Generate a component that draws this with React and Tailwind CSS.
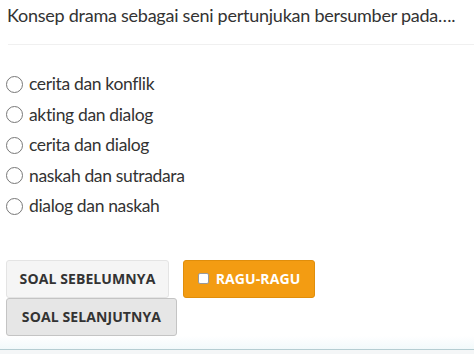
import React, { useState } from "react";

const options = [
  "cerita dan konflik",
  "akting dan dialog",
  "cerita dan dialog",
  "naskah dan sutradara",
  "dialog dan naskah",
];

const App = () => {
  const [picked, setPicked] = useState(null);
  const [ragu, setRagu] = useState(false);

  return (
    <div className="w-[474px] h-[354px] overflow-hidden bg-white flex flex-col font-['Lato',sans-serif] text-[#333]">
      {/* Question */}
      <div className="pl-[7px] pt-[3px] h-[48px] text-[18px] leading-[24px] tracking-[-0.25px]">
        Konsep drama sebagai seni pertunjukan bersumber pada….
      </div>
      <div className="ml-[8px] border-t border-[#f0f0f0]"></div>

      {/* Options */}
      <div className="flex flex-col pt-[24px] pl-[6px]">
        {options.map((opt, idx) => (
          <label
            key={idx}
            onClick={() => setPicked(idx)}
            className="flex items-center h-[30.5px] gap-[6px] text-[17.5px] tracking-[-0.35px] cursor-pointer"
          >
            <span className="w-[17px] h-[17px] rounded-full border border-[#777] flex items-center justify-center">
              {picked === idx && (
                <span className="w-[9px] h-[9px] rounded-full bg-[#333]"></span>
              )}
            </span>
            <span>{opt}</span>
          </label>
        ))}
      </div>

      {/* Buttons */}
      <div className="pl-[6px] pt-[38px] flex flex-col font-['Open_Sans',sans-serif] font-bold text-[14px] tracking-[0.1px]">
        <div className="flex gap-[14px]">
          <button className="w-[163px] h-[38px] bg-[#f5f5f5] border border-[#e4e4e4] rounded-[3px] text-[#333] uppercase">
            Soal Sebelumnya
          </button>
          <button
            onClick={() => setRagu(!ragu)}
            className="w-[132px] h-[38px] bg-[#f39c12] border border-[#e08e0b] rounded-[3px] text-white uppercase flex items-center justify-center gap-[7px]"
          >
            <span className="w-[11px] h-[11px] bg-white border border-[#999] rounded-[2px] flex items-center justify-center text-[8px] text-[#333]">
              {ragu ? "✓" : ""}
            </span>
            Ragu-Ragu
          </button>
        </div>
        <button className="w-[171px] h-[38px] bg-[#e6e6e6] border border-[#c4c4c4] rounded-[3px] text-[#333] uppercase">
          Soal Selanjutnya
        </button>
      </div>

      {/* Footer edge */}
      <div className="mt-auto h-[14px] bg-gradient-to-b from-white to-[#f2f9fb]"></div>
      <div className="h-[2px] bg-[#b5cdd2]"></div>
      <div className="h-[4px] bg-[#f4f6f7]"></div>
    </div>
  );
};

export default App;
